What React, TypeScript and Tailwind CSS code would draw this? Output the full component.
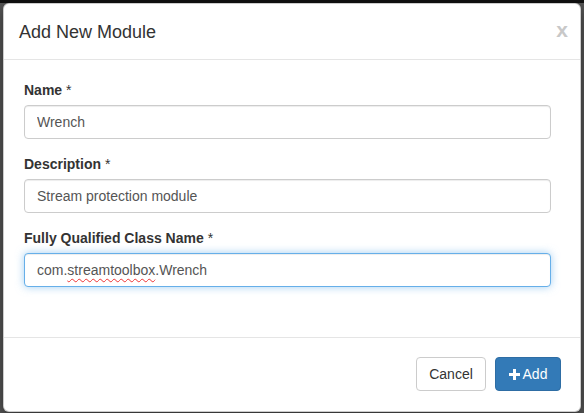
import React from 'react'

function PlusIcon() {
  return (
    <svg width="11" height="11" viewBox="0 0 11 11" className="inline-block align-[-1px] mr-[3px]">
      <rect x="4" y="0" width="3" height="11" fill="white" />
      <rect x="0" y="4" width="11" height="3" fill="white" />
    </svg>
  )
}

export default function App() {
  const inputClass =
    'block w-full h-[34px] px-[12px] py-[6px] text-[14px] leading-[20px] text-[#555] bg-white border border-[#ccc] rounded-[4px] shadow-[inset_0_1px_1px_rgba(0,0,0,0.075)] outline-none'

  return (
    <div className="relative w-[584px] h-[413px] overflow-hidden bg-[#575757] font-['Liberation_Sans',Arial,sans-serif] text-[#333]">
      <div className="h-[3px] bg-[#111]" />

      <div className="absolute left-[3px] top-[3px] w-[578px] bg-white border border-[rgba(0,0,0,0.2)] rounded-[6px] shadow-[0_5px_15px_rgba(0,0,0,0.5)]">
        {/* header */}
        <div className="h-[56px] pl-[15px] pr-[12px] border-b border-[#e5e5e5] flex items-center justify-between">
          <h4 className="text-[18px] leading-[26px] font-normal">Add New Module</h4>
          <button className="text-[21px] font-bold leading-none text-[#c8c8c8] pb-[4px]">x</button>
        </div>

        {/* body */}
        <div className="pt-[20px] pb-[50px] pl-[20px] pr-[29px]">
          <div className="mb-[15px]">
            <label className="block text-[14px] leading-[20px] font-bold mb-[5px]">
              Name <span className="font-normal">*</span>
            </label>
            <input className={inputClass} defaultValue="Wrench" readOnly />
          </div>
          <div className="mb-[15px]">
            <label className="block text-[14px] leading-[20px] font-bold mb-[5px]">
              Description <span className="font-normal">*</span>
            </label>
            <input className={inputClass} defaultValue="Stream protection module" readOnly />
          </div>
          <div>
            <label className="block text-[14px] leading-[20px] font-bold mb-[5px]">
              Fully Qualified Class Name <span className="font-normal">*</span>
            </label>
            <div className="h-[34px] px-[12px] py-[6px] text-[14px] leading-[20px] text-[#555] bg-white border border-[#66afe9] rounded-[4px] shadow-[inset_0_1px_1px_rgba(0,0,0,0.075),0_0_8px_rgba(102,175,233,0.6)]">
              com.<span className="underline decoration-wavy decoration-[#e33] decoration-1 underline-offset-[3px]">streamtoolbox</span>.Wrench
            </div>
          </div>
        </div>

        {/* footer */}
        <div className="border-t border-[#e5e5e5] pt-[19px] pb-[20px] px-[19px] flex justify-end gap-[9px]">
          <button className="h-[34px] w-[70px] text-[14px] text-[#333] bg-white border border-[#ccc] rounded-[4px]">
            Cancel
          </button>
          <button className="h-[34px] w-[66px] text-[14px] text-white bg-[#337ab7] border border-[#2e6da4] rounded-[4px]">
            <PlusIcon />Add
          </button>
        </div>
      </div>
    </div>
  )
}
